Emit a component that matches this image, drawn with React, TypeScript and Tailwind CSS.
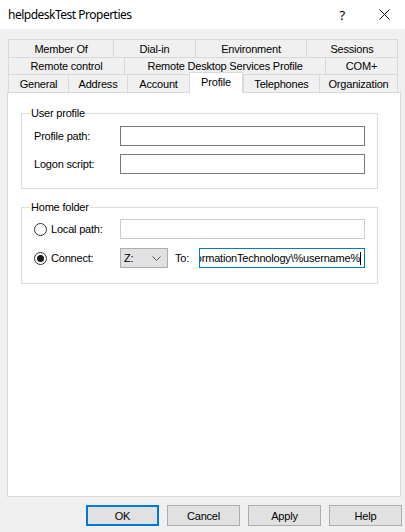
const font = { fontFamily: '"Liberation Sans", Arial, sans-serif' }

const Tab = ({ label, w, last }: { label: string; w: string; last?: boolean }) => (
  <div
    className={`${w} h-full flex items-center justify-center border-t border-l border-[#d9d9d9] bg-[#f0f0f0] ${last ? 'border-r' : ''}`}
  >
    {label}
  </div>
)

const Radio = ({ checked }: { checked?: boolean }) => (
  <div className="w-[13px] h-[13px] rounded-full border border-[#333333] bg-white flex items-center justify-center">
    {checked && <div className="w-[7px] h-[7px] rounded-full bg-[#1a1a1a]" />}
  </div>
)

const Button = ({ label, primary }: { label: string; primary?: boolean }) => (
  <div
    className={`w-[73px] h-[21px] flex items-center justify-center bg-[#e1e1e1] ${primary ? 'border-2 border-[#0078d7]' : 'border border-[#adadad]'}`}
  >
    {label}
  </div>
)

export default function App() {
  return (
    <div className="w-[405px] h-[532px] bg-[#f0f0f0] text-black text-[11px] leading-[14px] tracking-[-0.2px] flex flex-col overflow-hidden" style={font}>
      {/* title bar */}
      <div className="h-[29px] bg-white flex items-center shrink-0">
        <span className="ml-[8px] text-[12px] tracking-[-0.5px] text-black" style={{ fontFamily: '"Noto Sans", "Liberation Sans", sans-serif' }}>
          helpdeskTest Properties
        </span>
        <span className="ml-auto mr-[34px] text-[13px]" style={{ fontFamily: '"Noto Sans", sans-serif' }}>?</span>
        <svg width="11" height="11" viewBox="0 0 11 11" className="mr-[15px]">
          <path d="M0.5 0.5 L10.5 10.5 M10.5 0.5 L0.5 10.5" stroke="#111" strokeWidth="1" />
        </svg>
      </div>

      {/* tabs */}
      <div className="mt-[10px] ml-[8px] w-[390px] flex flex-col shrink-0">
        <div className="flex h-[18px]">
          <Tab label="Member Of" w="w-[105px]" />
          <Tab label="Dial-in" w="w-[82px]" />
          <Tab label="Environment" w="w-[111px]" />
          <Tab label="Sessions" w="w-[92px]" last />
        </div>
        <div className="flex h-[17px]">
          <Tab label="Remote control" w="w-[116px]" />
          <Tab label="Remote Desktop Services Profile" w="w-[201px]" />
          <Tab label="COM+" w="w-[73px]" last />
        </div>
        <div className="flex h-[18px] items-end">
          <Tab label="General" w="w-[60px]" />
          <Tab label="Address" w="w-[59px]" />
          <Tab label="Account" w="w-[62px]" />
          <div className="relative z-10 w-[54px] h-[21px] -mb-px flex items-start justify-center pt-[2px] bg-white border-t border-l border-r border-[#d9d9d9]">
            Profile
          </div>
          <Tab label="Telephones" w="w-[76px]" />
          <Tab label="Organization" w="w-[79px]" last />
        </div>
      </div>

      {/* panel */}
      <div className="ml-[7px] w-[394px] h-[405px] bg-white border border-[#d9d9d9] flex flex-col shrink-0">
        <div className="mt-[20px] ml-[13px] w-[357px] border border-[#dcdcdc] flex flex-col pb-[14px]">
          <span className="-mt-[8px] ml-[8px] px-[1px] bg-white w-fit">User profile</span>
          <div className="mt-[6px] flex flex-col gap-[8px] pl-[12px]">
            <div className="flex items-center h-[20px]">
              <span className="w-[86px]">Profile path:</span>
              <div className="w-[245px] h-[20px] border border-[#7a7a7a] bg-white" />
            </div>
            <div className="flex items-center h-[20px]">
              <span className="w-[86px]">Logon script:</span>
              <div className="w-[245px] h-[20px] border border-[#7a7a7a] bg-white" />
            </div>
          </div>
        </div>

        <div className="mt-[18px] ml-[13px] w-[357px] border border-[#dcdcdc] flex flex-col pb-[15px]">
          <span className="-mt-[8px] ml-[8px] px-[1px] bg-white w-fit">Home folder</span>
          <div className="mt-[5px] flex flex-col gap-[9px] pl-[12px]">
            <div className="flex items-center h-[20px]">
              <div className="w-[86px] flex items-center gap-[4px]">
                <Radio />
                <span>Local path:</span>
              </div>
              <div className="w-[245px] h-[20px] border border-[#cccccc] bg-white" />
            </div>
            <div className="flex items-center h-[20px]">
              <div className="w-[86px] flex items-center gap-[4px]">
                <Radio checked />
                <span>Connect:</span>
              </div>
              <div className="w-[48px] h-[20px] border border-[#adadad] bg-[#e1e1e1] flex items-center pl-[3px] pr-[6px]">
                <span>Z:</span>
                <svg width="9" height="5" viewBox="0 0 9 5" className="ml-auto">
                  <path d="M0.5 0.5 L4.5 4.5 L8.5 0.5" fill="none" stroke="#555" strokeWidth="1" />
                </svg>
              </div>
              <span className="ml-[7px] w-[24px]">To:</span>
              <div className="w-[166px] h-[20px] border border-[#0078d7] bg-white flex items-center justify-end overflow-hidden pr-[3px] whitespace-nowrap">
                <span>ormationTechnology\%username%</span>
                <span className="w-px h-[13px] shrink-0 bg-black" />
              </div>
            </div>
          </div>
        </div>
      </div>

      {/* buttons */}
      <div className="mt-[8px] flex justify-end gap-[8px] pr-[3px]">
        <Button label="OK" primary />
        <Button label="Cancel" />
        <Button label="Apply" />
        <Button label="Help" />
      </div>
    </div>
  )
}
